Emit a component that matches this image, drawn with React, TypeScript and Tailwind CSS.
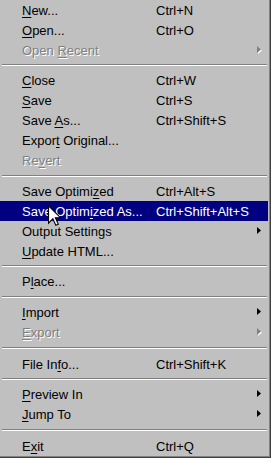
import React from 'react';

type Item =
  | { sep: true; h: number }
  | {
      sep?: false;
      label: string;
      u: number; // index of underlined letter
      key?: string;
      sub?: boolean;
      off?: boolean;
      hot?: boolean;
    };

const items: Item[] = [
  { label: 'New...', u: 0, key: 'Ctrl+N' },
  { label: 'Open...', u: 0, key: 'Ctrl+O' },
  { label: 'Open Recent', u: 5, sub: true, off: true },
  { sep: true, h: 10 },
  { label: 'Close', u: 0, key: 'Ctrl+W' },
  { label: 'Save', u: 0, key: 'Ctrl+S' },
  { label: 'Save As...', u: 5, key: 'Ctrl+Shift+S' },
  { label: 'Export Original...', u: 5 },
  { label: 'Revert', u: 2, off: true },
  { sep: true, h: 11 },
  { label: 'Save Optimized', u: 11, key: 'Ctrl+Alt+S' },
  { label: 'Save Optimized As...', u: 10, key: 'Ctrl+Shift+Alt+S', hot: true },
  { label: 'Output Settings', u: 13, sub: true },
  { label: 'Update HTML...', u: 0 },
  { sep: true, h: 10 },
  { label: 'Place...', u: 1 },
  { sep: true, h: 11 },
  { label: 'Import', u: 0, sub: true },
  { label: 'Export', u: 0, sub: true, off: true },
  { sep: true, h: 12 },
  { label: 'File Info...', u: 7, key: 'Ctrl+Shift+K' },
  { sep: true, h: 10 },
  { label: 'Preview In', u: 0, sub: true },
  { label: 'Jump To', u: 0, sub: true },
  { sep: true, h: 12 },
  { label: 'Exit', u: 1, key: 'Ctrl+Q' },
];

const Arrow: React.FC<{ off?: boolean; hot?: boolean }> = ({ off, hot }) => (
  <svg width="5" height="8" viewBox="0 0 5 8" className="block">
    {off && <path d="M1 1 L5 4.5 L1 8 Z" fill="#ffffff" />}
    <path d="M0 0 L4 3.5 L0 7 Z" fill={off ? '#808080' : hot ? '#ffffff' : '#000000'} />
  </svg>
);

const Label: React.FC<{ text: string; u: number }> = ({ text, u }) => (
  <>
    {text.slice(0, u)}
    <span className="underline underline-offset-2">{text[u]}</span>
    {text.slice(u + 1)}
  </>
);

const App: React.FC = () => {
  return (
    <div className="w-[271px] h-[458px] bg-[#c0c0c0] font-['Liberation_Sans',Arial,sans-serif] text-[13px] leading-none text-black overflow-hidden">
      <div className="h-full border-r border-b border-[#404040]">
        <div className="relative h-full pr-px border-r border-b border-[#808080] flex flex-col">
          {items.map((it, i) =>
            it.sep ? (
              <div key={i} className="flex items-center pl-[2px] pr-[1px]" style={{ height: it.h }}>
                <div className="w-full h-[2px] border-t border-b border-t-[#808080] border-b-white" />
              </div>
            ) : (
              <div
                key={i}
                className={`h-[20px] shrink-0 flex items-center pl-[22px] pr-[6px] ${
                  it.hot ? 'bg-[#000080] text-white' : ''
                } ${it.off ? 'text-[#808080] [text-shadow:1px_1px_0_#ffffff]' : ''}`}
              >
                <span className="w-[134px] whitespace-nowrap">
                  <Label text={it.label} u={it.u} />
                </span>
                <span className="flex-1 whitespace-nowrap">{it.key}</span>
                {it.sub && <Arrow off={it.off} hot={it.hot} />}
              </div>
            )
          )}
          <svg
            className="absolute left-[48px] top-[205px]"
            width="13"
            height="21"
            viewBox="0 0 12 19"
          >
            <path
              d="M0.5 0.5 L0.5 16.5 L4.5 12.5 L7.2 18.5 L9.5 17.5 L6.8 11.5 L11.5 11.5 Z"
              fill="#ffffff"
              stroke="#000000"
              strokeWidth="1"
              strokeLinejoin="miter"
            />
          </svg>
        </div>
      </div>
    </div>
  );
};

export default App;
